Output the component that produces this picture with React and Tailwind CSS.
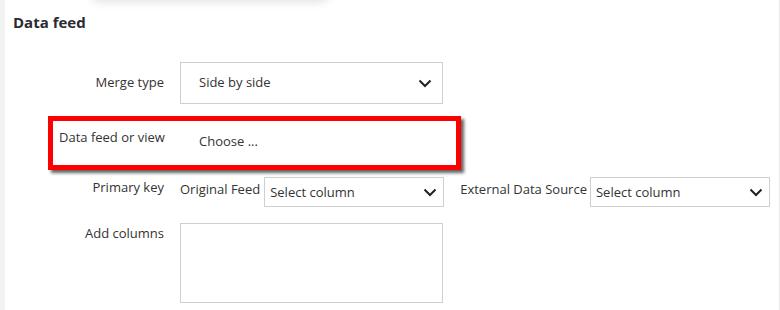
import React from "react";

function Chevron() {
  return (
    <svg width="14" height="9" viewBox="0 0 14 9" className="shrink-0">
      <polyline points="1.5,1.5 7,7 12.5,1.5" fill="none" stroke="#222" strokeWidth="2" />
    </svg>
  );
}

export default function App() {
  return (
    <div
      className="relative w-[780px] h-[310px] bg-white flex overflow-hidden text-[#333]"
      style={{ fontFamily: '"Open Sans", "Noto Sans", sans-serif' }}
    >
      <div className="absolute top-[-20px] left-[90px] w-[240px] h-[20px] shadow-[0_2px_10px_rgba(0,0,0,0.12)] rounded-full bg-white" />
      <div className="w-[5px] shrink-0 bg-[#f2f2f2]" />
      <div className="flex-1 border-r border-[#e8e8e8] flex flex-col">
        <h2 className="mt-[11px] ml-[8px] text-[15px] leading-[22px] font-bold text-[#2a2a33]">Data feed</h2>

        {/* Merge type */}
        <div className="flex items-center mt-[29px]">
          <div className="w-[159px] text-right text-[13px]">Merge type</div>
          <div className="ml-[16px] w-[263px] h-[42px] border border-[#cfcfcf] flex items-center justify-between pl-[18px] pr-[10px] text-[13px]">
            <span>Side by side</span>
            <Chevron />
          </div>
        </div>

        {/* Data feed or view (highlighted) */}
        <div className="mt-[12px] ml-[43px] w-[413px] h-[54px] border-[5px] border-[#ff0000] shadow-[3px_3px_3px_rgba(60,60,60,0.8)] flex text-[13px]">
          <div className="pl-[6px] pt-[7px] w-[146px]">Data feed or view</div>
          <div className="pt-[11px]">Choose ...</div>
        </div>

        {/* Primary key */}
        <div className="flex items-start mt-[7px] text-[13px]">
          <div className="w-[159px] text-right mt-[1px]">Primary key</div>
          <div className="ml-[16px] mt-[3px]">Original Feed</div>
          <div className="ml-[4px] w-[180px] h-[30px] border border-[#cfcfcf] flex items-center justify-between pl-[5px] pr-[6px] text-[13px]">
            <span className="mt-[2px]">Select column</span>
            <Chevron />
          </div>
          <div className="ml-[16px] mt-[3px]">External Data Source</div>
          <div className="ml-[3px] w-[180px] h-[30px] border border-[#cfcfcf] flex items-center justify-between pl-[5px] pr-[6px] text-[13px]">
            <span className="mt-[2px]">Select column</span>
            <Chevron />
          </div>
        </div>

        {/* Add columns */}
        <div className="flex items-start mt-[16px] text-[13px]">
          <div className="w-[159px] text-right mt-[1px]">Add columns</div>
          <div className="ml-[16px] w-[263px] h-[80px] border border-[#cfcfcf]" />
        </div>
      </div>
    </div>
  );
}
